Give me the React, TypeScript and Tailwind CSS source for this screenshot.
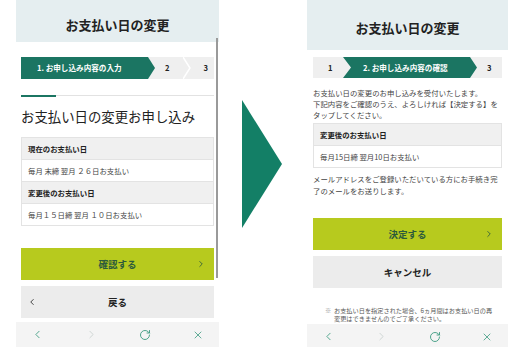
import { ChevronLeft, ChevronRight, RotateCw, X } from "lucide-react";

const GREEN = "bg-[#1b7562]";

function NavBar() {
  return (
    <div className="flex h-[25px] items-center justify-between bg-[#f4f4f4] px-[15px]">
      <ChevronLeft className="h-[13px] w-[13px] text-[#3c9b80]" strokeWidth={1.6} />
      <ChevronRight className="h-[13px] w-[13px] text-[#c9d1ce]" strokeWidth={1.6} />
      <RotateCw className="h-[12px] w-[12px] text-[#3c9b80]" strokeWidth={1.8} />
      <X className="h-[12px] w-[12px] text-[#3c9b80]" strokeWidth={1.6} />
    </div>
  );
}

function Header({ h, pt }: { h: string; pt: string }) {
  return (
    <div className={`${h} ${pt} bg-[#e5eef0] text-center text-[13px] font-bold leading-[16px] text-[#222]`}>
      お支払い日の変更
    </div>
  );
}

function Row({ head, children }: { head?: boolean; children: React.ReactNode }) {
  return (
    <div
      className={`flex h-[22px] items-center border-b border-[#e3e3e3] px-[6px] text-[7.4px] ${
        head ? "bg-[#f0f0f0] font-bold text-[#222]" : "bg-white text-[#444]"
      }`}
    >
      {children}
    </div>
  );
}

function LeftPhone() {
  return (
    <div className="relative flex w-[203px] flex-col">
      <Header h="h-[42px]" pt="pt-[17px]" />
      <div className="px-[5px]">
        <div className="mt-[15px] flex h-[22px] items-center bg-[#efefef] text-[7.6px] font-bold text-[#222]">
          <div
            className={`${GREEN} flex h-full w-[134px] items-center pl-[16px] text-white [clip-path:polygon(0_0,calc(100%-7px)_0,100%_50%,calc(100%-7px)_100%,0_100%)]`}
          >
            1. お申し込み内容の入力
          </div>
          <div className="w-[10px]" />
          <div>2</div>
          <svg width="8" height="22" viewBox="0 0 8 22" className="ml-[14px]">
            <polyline points="0,0 7,11 0,22" fill="none" stroke="#fff" strokeWidth="1.5" />
          </svg>
          <div className="ml-[12px]">3</div>
        </div>
        <div className="mt-[16px] flex items-start">
          <div className="h-[2px] w-[35px] bg-[#1b7562]" />
          <div className="h-px flex-1 bg-[#e2e2e2]" />
        </div>
        <div className="mt-[10px] text-[13.4px] leading-[18px] text-[#222]">お支払い日の変更お申し込み</div>
        <div className="mt-[12px] border-x border-t border-[#e3e3e3]">
          <Row head>現在のお支払い日</Row>
          <Row>毎月 末締 翌月 ２６日お支払い</Row>
          <Row head>変更後のお支払い日</Row>
          <Row>毎月１５日締 翌月 １０日お支払い</Row>
        </div>
        <button className="relative mt-[22px] flex h-[32px] w-full items-center justify-center bg-[#b7ca1e] text-[9.5px] font-bold text-[#2d5a3c]">
          確認する
          <ChevronRight className="absolute right-[8px] h-[10px] w-[10px]" strokeWidth={2} />
        </button>
        <button className="relative mt-[6px] flex h-[32px] w-full items-center justify-center bg-[#ececec] text-[9.5px] font-bold text-[#222]">
          <ChevronLeft className="absolute left-[6px] h-[10px] w-[10px]" strokeWidth={2} />
          戻る
        </button>
      </div>
      <div className="mt-[4px]">
        <NavBar />
      </div>
      <div className="absolute left-[200px] top-[38px] h-[240px] w-[2px] bg-[#9a9a9a]" />
    </div>
  );
}

function RightPhone() {
  return (
    <div className="flex w-[201px] flex-col">
      <Header h="h-[50px]" pt="pt-[20px]" />
      <div className="px-[6px]">
        <div className="mt-[7px] flex h-[21px] items-center bg-[#efefef] text-[7.6px] font-bold text-[#222]">
          <div className="w-[30px] pl-[15px]">1</div>
          <div
            className={`${GREEN} flex h-full w-[134px] items-center pl-[20px] text-white [clip-path:polygon(0_0,calc(100%-7px)_0,100%_50%,calc(100%-7px)_100%,0_100%,8px_50%)]`}
          >
            2. お申し込み内容の確認
          </div>
          <div className="ml-[10px]">3</div>
        </div>
        <p className="mt-[9px] text-[7.4px] leading-[11px] text-[#444]">
          お支払い日の変更のお申し込みを受付いたします。
          <br />
          下記内容をご確認のうえ、よろしければ【決定する】を
          <br />
          タップしてください。
        </p>
        <div className="mt-[3px] border-x border-t border-[#e3e3e3]">
          <Row head>変更後のお支払い日</Row>
          <Row>毎月15日締 翌月10日お支払い</Row>
        </div>
        <p className="mt-[5px] text-[7.4px] leading-[12px] text-[#444]">
          メールアドレスをご登録いただいている方にお手続き完
          <br />
          了のメールをお送りします。
        </p>
        <button className="relative mt-[21px] flex h-[32px] w-full items-center justify-center bg-[#b7ca1e] text-[9.5px] font-bold text-[#2d5a3c]">
          決定する
          <ChevronRight className="absolute right-[8px] h-[10px] w-[10px]" strokeWidth={2} />
        </button>
        <button className="mt-[6px] flex h-[32px] w-full items-center justify-center bg-[#ececec] text-[9.5px] font-bold text-[#222]">
          キャンセル
        </button>
        <div className="mt-[19px] flex pl-[12px] text-[6.2px] leading-[8px] text-[#555]">
          <span className="w-[9px] shrink-0 text-[#999]">※</span>
          <span>
            お支払い日を指定された場合、6ヵ月間はお支払い日の再
            <br />
            変更はできませんのでご了承ください。
          </span>
        </div>
      </div>
      <div className="mt-[1px]">
        <NavBar />
      </div>
    </div>
  );
}

export default function App() {
  return (
    <div className="flex h-[347px] w-[520px] items-start overflow-hidden bg-white font-['Noto_Sans_CJK_JP',sans-serif]">
      <div className="ml-[16px]">
        <LeftPhone />
      </div>
      <svg width="40" height="128" viewBox="0 0 40 128" className="ml-[23px] mt-[100px] shrink-0">
        <polygon points="0,0 40,64 0,128" fill="#137f66" />
      </svg>
      <div className="ml-[25px]">
        <RightPhone />
      </div>
    </div>
  );
}
